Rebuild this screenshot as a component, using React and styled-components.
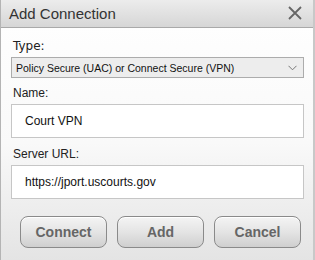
import styled, { createGlobalStyle } from 'styled-components'

const Global = createGlobalStyle`
body {
    margin: 0;
    background: #ffffff;
}
`;

const Dialog = styled.div`
width: 315px;
height: 260px;
box-sizing: border-box;
display: flex;
flex-direction: column;
border-left: 1px solid #b4b4b4;
border-right: 2px solid #c8c8c8;
background: linear-gradient(#ffffff 0%, #f9f9f9 55%, #e4e4e4 100%);
font-family: "Liberation Sans", Arial, sans-serif;
`;

const TitleBar = styled.div`
height: 28px;
box-sizing: border-box;
display: flex;
align-items: center;
justify-content: space-between;
padding: 0 8px 1px 8px;
background: linear-gradient(#ececec, #d6d6d6);
border-bottom: 1px solid #a9a9a9;
`;

const Title = styled.span`
font-family: "Liberation Sans", Arial, sans-serif;
font-size: 15px;
color: #333;
`;

const CloseBtn = styled.button`
border: none;
background: none;
padding: 0;
width: 16px;
height: 16px;
margin-right: 2px;
display: flex;
align-items: center;
justify-content: center;
cursor: pointer;
`;

const Body = styled.div`
flex: 1;
display: flex;
flex-direction: column;
padding: 11px 9px 0 10px;
`;

const Label = styled.label`
font-family: ${(p) => (p.tahoma ? '"DejaVu Sans", Tahoma, sans-serif' : '"Liberation Sans", Arial, sans-serif')};
font-size: 12px;
line-height: 14px;
color: #222;
margin: 0 0 4px 2px;
`;

const SelectBox = styled.div`
height: 21px;
box-sizing: border-box;
display: flex;
align-items: center;
justify-content: space-between;
padding: 0 6px 0 4px;
background: #ededed;
border: 1px solid #acacac;
margin-bottom: 8px;
font-family: "Liberation Sans", Arial, sans-serif;
font-size: 10.5px;
color: #111;
`;

const Field = styled.div`
height: 34px;
box-sizing: border-box;
display: flex;
align-items: center;
padding-left: 13px;
background: #ffffff;
border: 1px solid #c6c6c6;
margin-bottom: ${(p) => p.mb ?? 9}px;
font-size: 12px;
color: #111;
`;

const Buttons = styled.div`
display: flex;
gap: 10px;
padding: 17px 3px 0 9px;
`;

const Button = styled.button`
width: 88px;
height: 32px;
box-sizing: border-box;
border: 1px solid #8a8a8a;
border-radius: 8px;
background: linear-gradient(#f4f4f4 0%, #e4e4e4 50%, #cfcfcf 100%);
box-shadow: inset 0 1px 0 #ffffff;
font-family: "Liberation Sans", Arial, sans-serif;
font-weight: bold;
font-size: 14px;
color: #666;
cursor: pointer;
`;

const Chevron = () => (
    <svg width="9" height="6" viewBox="0 0 9 6">
        <path d="M0.5 0.8 L4.5 4.8 L8.5 0.8" fill="none" stroke="#777" strokeWidth="1" />
    </svg>
)

const XIcon = () => (
    <svg width="14" height="14" viewBox="0 0 14 14">
        <path d="M1 1 L13 13 M13 1 L1 13" stroke="#666" strokeWidth="1.8" />
    </svg>
)

export default function App() {
    return (
        <Dialog>
            <Global />
            <TitleBar>
                <Title>Add Connection</Title>
                <CloseBtn><XIcon /></CloseBtn>
            </TitleBar>
            <Body>
                <Label tahoma>Type:</Label>
                <SelectBox>
                    Policy Secure (UAC) or Connect Secure (VPN)
                    <Chevron />
                </SelectBox>
                <Label>Name:</Label>
                <Field>Court VPN</Field>
                <Label>Server URL:</Label>
                <Field mb={0}>https://jport.uscourts.gov</Field>
                <Buttons>
                    <Button>Connect</Button>
                    <Button>Add</Button>
                    <Button>Cancel</Button>
                </Buttons>
            </Body>
        </Dialog>
    )
}
